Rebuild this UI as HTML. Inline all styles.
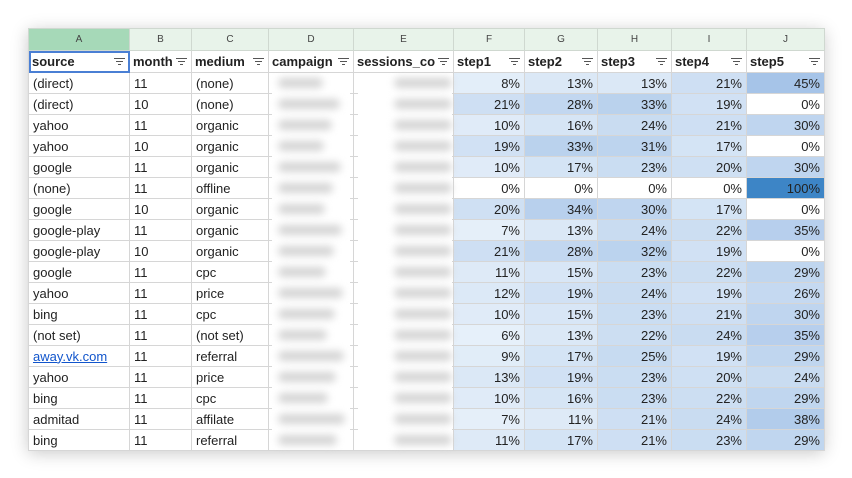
<!DOCTYPE html>
<html><head><meta charset="utf-8"><style>
body{margin:0;width:852px;height:478px;background:#fff;overflow:hidden;font-family:"Liberation Sans",Arial,sans-serif;}
.wrap{position:absolute;left:28px;top:28px;width:796px;height:422px;box-shadow:0 3px 16px rgba(0,0,0,.22);background:#fff}
table{border-collapse:collapse;table-layout:fixed;width:796px;font-size:13px;color:#222}
td{border:1px solid #d6d6d6;height:20px;padding:0 4px;white-space:nowrap;overflow:hidden}
tr.let td{height:21px;background:#e8f3ea;text-align:center;font-size:10px;color:#444;border-color:#cfd8d0}
tr.let td.sel{background:#a6d9b8}
tr.hd td{height:21px;font-weight:bold;background:#fff;position:relative;padding-left:3px}
tr.hd td i{position:absolute;right:4px;top:7px;width:11px;height:7px}
tr.hd td i:before{content:"";position:absolute;left:0;top:0;width:11px;height:1px;background:#555}
tr.hd td i b{position:absolute;left:2px;top:3px;width:7px;height:1px;background:#555}
tr.hd td i u{position:absolute;left:4px;top:6px;width:3px;height:1px;background:#555}
td.n{text-align:right}
.act{outline:2px solid #4a7fd4;outline-offset:-2px}
.bl{position:absolute;background:#fff;top:45px;height:377px}
.sm{position:absolute;height:10px;background:#d4d4d4;border-radius:5px;filter:blur(4px)}
a{color:#1155cc;text-decoration:underline}
</style></head><body>
<div class="wrap">
<table>
<colgroup><col style="width:101px"><col style="width:62px"><col style="width:77px"><col style="width:85px"><col style="width:100px"><col style="width:71px"><col style="width:73px"><col style="width:74px"><col style="width:75px"><col style="width:78px"></colgroup>
<tr class="let"><td class="sel">A</td><td>B</td><td>C</td><td>D</td><td>E</td><td>F</td><td>G</td><td>H</td><td>I</td><td>J</td></tr>
<tr class="hd"><td class="act">source<i><b></b><u></u></i></td><td>month<i><b></b><u></u></i></td><td>medium<i><b></b><u></u></i></td><td>campaign<i><b></b><u></u></i></td><td>sessions_co<i><b></b><u></u></i></td><td>step1<i><b></b><u></u></i></td><td>step2<i><b></b><u></u></i></td><td>step3<i><b></b><u></u></i></td><td>step4<i><b></b><u></u></i></td><td>step5<i><b></b><u></u></i></td></tr>
<tbody id="tb">
<tr><td>(direct)</td><td>11</td><td>(none)</td><td></td><td></td><td class="n">8%</td><td class="n">13%</td><td class="n">13%</td><td class="n">21%</td><td class="n">45%</td></tr>
<tr><td>(direct)</td><td>10</td><td>(none)</td><td></td><td></td><td class="n">21%</td><td class="n">28%</td><td class="n">33%</td><td class="n">19%</td><td class="n">0%</td></tr>
<tr><td>yahoo</td><td>11</td><td>organic</td><td></td><td></td><td class="n">10%</td><td class="n">16%</td><td class="n">24%</td><td class="n">21%</td><td class="n">30%</td></tr>
<tr><td>yahoo</td><td>10</td><td>organic</td><td></td><td></td><td class="n">19%</td><td class="n">33%</td><td class="n">31%</td><td class="n">17%</td><td class="n">0%</td></tr>
<tr><td>google</td><td>11</td><td>organic</td><td></td><td></td><td class="n">10%</td><td class="n">17%</td><td class="n">23%</td><td class="n">20%</td><td class="n">30%</td></tr>
<tr><td>(none)</td><td>11</td><td>offline</td><td></td><td></td><td class="n">0%</td><td class="n">0%</td><td class="n">0%</td><td class="n">0%</td><td class="n">100%</td></tr>
<tr><td>google</td><td>10</td><td>organic</td><td></td><td></td><td class="n">20%</td><td class="n">34%</td><td class="n">30%</td><td class="n">17%</td><td class="n">0%</td></tr>
<tr><td>google-play</td><td>11</td><td>organic</td><td></td><td></td><td class="n">7%</td><td class="n">13%</td><td class="n">24%</td><td class="n">22%</td><td class="n">35%</td></tr>
<tr><td>google-play</td><td>10</td><td>organic</td><td></td><td></td><td class="n">21%</td><td class="n">28%</td><td class="n">32%</td><td class="n">19%</td><td class="n">0%</td></tr>
<tr><td>google</td><td>11</td><td>cpc</td><td></td><td></td><td class="n">11%</td><td class="n">15%</td><td class="n">23%</td><td class="n">22%</td><td class="n">29%</td></tr>
<tr><td>yahoo</td><td>11</td><td>price</td><td></td><td></td><td class="n">12%</td><td class="n">19%</td><td class="n">24%</td><td class="n">19%</td><td class="n">26%</td></tr>
<tr><td>bing</td><td>11</td><td>cpc</td><td></td><td></td><td class="n">10%</td><td class="n">15%</td><td class="n">23%</td><td class="n">21%</td><td class="n">30%</td></tr>
<tr><td>(not set)</td><td>11</td><td>(not set)</td><td></td><td></td><td class="n">6%</td><td class="n">13%</td><td class="n">22%</td><td class="n">24%</td><td class="n">35%</td></tr>
<tr><td><a>away.vk.com</a></td><td>11</td><td>referral</td><td></td><td></td><td class="n">9%</td><td class="n">17%</td><td class="n">25%</td><td class="n">19%</td><td class="n">29%</td></tr>
<tr><td>yahoo</td><td>11</td><td>price</td><td></td><td></td><td class="n">13%</td><td class="n">19%</td><td class="n">23%</td><td class="n">20%</td><td class="n">24%</td></tr>
<tr><td>bing</td><td>11</td><td>cpc</td><td></td><td></td><td class="n">10%</td><td class="n">16%</td><td class="n">23%</td><td class="n">22%</td><td class="n">29%</td></tr>
<tr><td>admitad</td><td>11</td><td>affilate</td><td></td><td></td><td class="n">7%</td><td class="n">11%</td><td class="n">21%</td><td class="n">24%</td><td class="n">38%</td></tr>
<tr><td>bing</td><td>11</td><td>referral</td><td></td><td></td><td class="n">11%</td><td class="n">17%</td><td class="n">21%</td><td class="n">23%</td><td class="n">29%</td></tr>
</tbody></table>
<div class="bl" id="bd" style="left:244px;width:78px"></div>
<div class="bl" id="be" style="left:330px;width:94px"></div>
</div>
<script>
document.querySelectorAll('#tb td.n').forEach(function(td){
 var v=parseInt(td.textContent);var r,g,b;
 if(v==0){r=g=b=255;}
 else if(v>=100){r=61;g=133;b=198;}
 else{var t=Math.min(1,(v-5)/40);r=Math.round(232-t*(232-166));g=Math.round(241-t*(241-196));b=Math.round(250-t*(250-232));}
 td.style.background='rgb('+r+','+g+','+b+')';
});
var bd=document.getElementById('bd'),be=document.getElementById('be'),h='',h2='';
for(var i=0;i<18;i++){var y=i*21+5;h+='<div class="sm" style="left:6px;top:'+y+'px;width:'+(45+(i*17)%25)+'px"></div>';h2+='<div class="sm" style="left:36px;top:'+y+'px;width:58px"></div>';}
bd.innerHTML=h;be.innerHTML=h2;
</script>
</body></html>
